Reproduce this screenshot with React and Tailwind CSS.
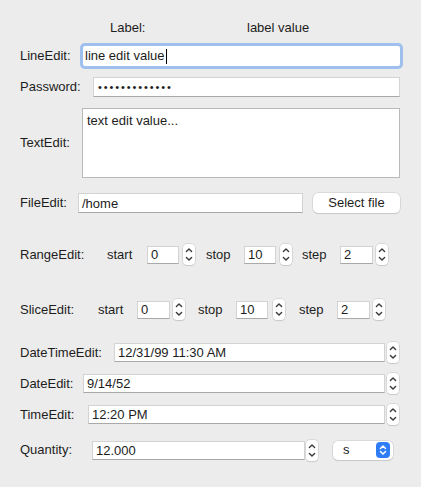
import React from "react";

const field =
  "bg-white border border-[#d3d3d3] border-b-[#a9a9a9] text-[13px] leading-none text-[#1c1c1c] flex items-center pl-[3px]";

const Stepper = ({ className = "" }) => (
  <div
    className={`w-[12px] h-[21px] bg-white rounded-[4px] shadow-[0_0_0_0.5px_#c4c4c4,0_1px_1px_rgba(0,0,0,0.12)] flex-none ${className}`}
  >
    <svg width="12" height="21" viewBox="0 0 12 21">
      <path d="M3.4 7.6 L6 5 L8.6 7.6" fill="none" stroke="#3a3a3a" strokeWidth="1.4" strokeLinecap="round" strokeLinejoin="round" />
      <path d="M3.4 13.4 L6 16 L8.6 13.4" fill="none" stroke="#3a3a3a" strokeWidth="1.4" strokeLinecap="round" strokeLinejoin="round" />
    </svg>
  </div>
);

const Spin = ({ value, w, gap }) => (
  <div className="flex items-center">
    <div className={`${field} h-[18px] ${w}`}>{value}</div>
    <Stepper className={gap} />
  </div>
);

export default function App() {
  return (
    <div
      className="w-[421px] h-[487px] bg-[#ececec] text-[13px] text-[#1d1d1d] pl-[20px] pt-[18px] flex flex-col"
      style={{ fontFamily: '"Liberation Sans", Arial, sans-serif' }}
    >
      {/* Label */}
      <div className="h-[20px] flex items-center">
        <span className="ml-[90px] w-[137px]">Label:</span>
        <span>label value</span>
      </div>

      {/* LineEdit */}
      <div className="mt-[5px] h-[26px] flex items-center">
        <span className="w-[63px]">LineEdit:</span>
        <div className="w-[317px] h-[20px] bg-white rounded-[2px] shadow-[0_0_0_3px_#9fbfee] flex items-center pl-[2px] text-[#1c1c1c]">
          line edit value
          <span className="w-[1px] h-[15px] bg-black ml-[1px]"></span>
        </div>
      </div>

      {/* Password */}
      <div className="mt-[8px] h-[20px] flex items-center">
        <span className="w-[73px]">Password:</span>
        <div className={`${field} w-[307px] h-[20px]`}>
          <span className="text-[11px] tracking-[1.9px] pl-[1px]">•••••••••••••</span>
        </div>
      </div>

      {/* TextEdit */}
      <div className="mt-[11px] h-[70px] flex items-center">
        <span className="w-[62px]">TextEdit:</span>
        <div className="w-[318px] h-[70px] bg-white border border-[#b9b9b9] pl-[4px] pt-[4px] leading-[16px]">
          text edit value...
        </div>
      </div>

      {/* FileEdit */}
      <div className="mt-[15px] h-[20px] flex items-center">
        <span className="w-[58px]">FileEdit:</span>
        <div className={`${field} w-[225px] h-[20px] pl-[2px]`}>/home</div>
        <button className="ml-[10px] w-[87px] h-[20px] bg-white rounded-[5px] shadow-[0_0_0_0.5px_#c8c8c8,0_1px_1px_rgba(0,0,0,0.15)] text-[13px] text-[#1d1d1d] flex items-center justify-center">
          Select file
        </button>
      </div>

      {/* RangeEdit */}
      <div className="mt-[31px] h-[21px] flex items-center">
        <span className="w-[87px]">RangeEdit:</span>
        <span className="w-[40px]">start</span>
        <Spin value="0" w="w-[32px]" gap="ml-[4px]" />
        <span className="ml-[11px] w-[38px]">stop</span>
        <Spin value="10" w="w-[32px]" gap="ml-[4px]" />
        <span className="ml-[10px] w-[38px]">step</span>
        <Spin value="2" w="w-[33px]" gap="ml-[3px]" />
      </div>

      {/* SliceEdit */}
      <div className="mt-[34px] h-[21px] flex items-center">
        <span className="w-[78px]">SliceEdit:</span>
        <span className="w-[39px]">start</span>
        <Spin value="0" w="w-[33px]" gap="ml-[3px]" />
        <span className="ml-[13px] w-[38px]">stop</span>
        <Spin value="10" w="w-[32px]" gap="ml-[5px]" />
        <span className="ml-[14px] w-[38px]">step</span>
        <Spin value="2" w="w-[33px]" gap="ml-[3px]" />
      </div>

      {/* DateTimeEdit */}
      <div className="mt-[23px] h-[19px] flex items-center">
        <span className="w-[94px]">DateTimeEdit:</span>
        <div className={`${field} w-[271px] h-[19px]`}>12/31/99 11:30 AM</div>
        <Stepper className="ml-[2px]" />
      </div>

      {/* DateEdit */}
      <div className="mt-[12px] h-[19px] flex items-center">
        <span className="w-[63px]">DateEdit:</span>
        <div className={`${field} w-[302px] h-[19px]`}>9/14/52</div>
        <Stepper className="ml-[2px]" />
      </div>

      {/* TimeEdit */}
      <div className="mt-[12px] h-[19px] flex items-center">
        <span className="w-[68px]">TimeEdit:</span>
        <div className={`${field} w-[297px] h-[19px]`}>12:20 PM</div>
        <Stepper className="ml-[2px]" />
      </div>

      {/* Quantity */}
      <div className="mt-[16px] h-[20px] flex items-center">
        <span className="w-[72px]">Quantity:</span>
        <div className={`${field} w-[213px] h-[19px]`}>12.000</div>
        <Stepper className="ml-[1px]" />
        <div className="ml-[15px] w-[60px] h-[19px] bg-white rounded-[5px] shadow-[0_0_0_0.5px_#c8c8c8,0_1px_1px_rgba(0,0,0,0.15)] flex items-center justify-between pl-[10px] pr-[3px]">
          <span>s</span>
          <div className="w-[14px] h-[16px] bg-[#2f7df6] rounded-[4px] flex items-center justify-center">
            <svg width="14" height="16" viewBox="0 0 14 16">
              <path d="M4.5 6.5 L7 4 L9.5 6.5" fill="none" stroke="white" strokeWidth="1.5" strokeLinecap="round" strokeLinejoin="round" />
              <path d="M4.5 9.5 L7 12 L9.5 9.5" fill="none" stroke="white" strokeWidth="1.5" strokeLinecap="round" strokeLinejoin="round" />
            </svg>
          </div>
        </div>
      </div>
    </div>
  );
}
